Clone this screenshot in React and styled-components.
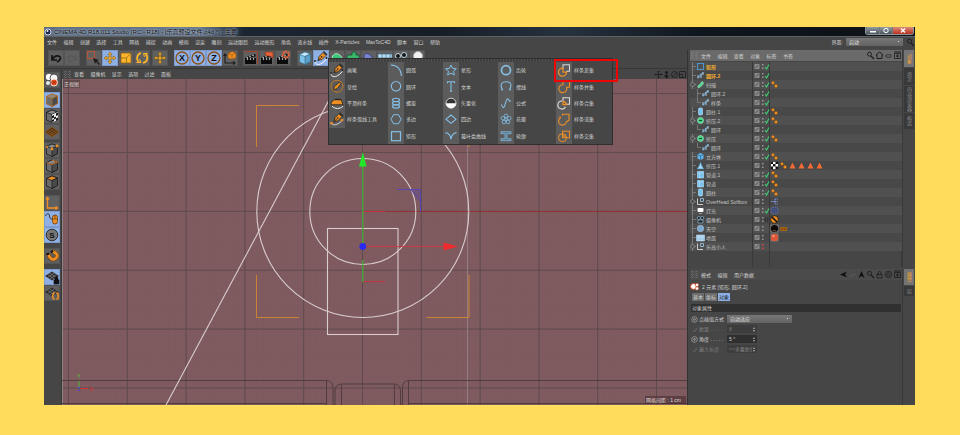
import React, { useState } from 'react';
import styled, { createGlobalStyle } from 'styled-components';

const menus = [
  '文件', '编辑', '创建', '选择', '工具', '网格', '捕捉', '动画', '模拟', '渲染', '雕刻',
  '运动跟踪', '运动图形', '角色', '流水线', '插件', 'X-Particles', 'MaxToC4D', '脚本', '窗口', '帮助',
];

const toolbarGroups = [
  { gap: 4, items: [['undo'], ['redo']] },
  { gap: 6, items: [['select'], ['move', true], ['scale'], ['rotate']] },
  { gap: 2, items: [['move']] },
  { gap: 6, items: [['axisX', true], ['axisY', true], ['axisZ', true], ['coord']] },
  { gap: 5, items: [['clap'], ['clapView'], ['clapGear']] },
  { gap: 6, items: [['cube'], ['pen', true], ['generator'], ['array'], ['deformer'], ['floor'], ['camera'], ['light']] },
];

const sideGroups = [
  { gap: 3, items: [['balls']] },
  { gap: 4, items: [['model', true], ['texture'], ['workplane']] },
  { gap: 2, items: [['points'], ['edges'], ['polys']] },
  { gap: 5, items: [['axisL'], ['mouse', true], ['snapS', true]] },
  { gap: 5, items: [['magnet']] },
  { gap: 5, items: [['planeLock', true], ['planeRot']] },
];

const splineColumns = [
  [['pen', '画笔'], ['sketch', '草绘'], ['smooth', '平滑样条'], ['arcTool', '样条弧线工具']],
  [['arc', '圆弧'], ['circle', '圆环'], ['helix', '螺旋'], ['ngon', '多边'], ['rect', '矩形']],
  [['star', '星形'], ['text', '文本'], ['vector', '矢量化'], ['diamond', '四边'], ['cissoid', '蔓叶类曲线']],
  [['cog', '齿轮'], ['cycloid', '摆线'], ['formula', '公式'], ['flower', '花瓣'], ['profile', '轮廓']],
  [['subtract', '样条差集'], ['union', '样条并集'], ['and', '样条合集'], ['or', '样条或集'], ['intersect', '样条交集']],
];

const objects = [
  { icon: 'oRect', name: '矩形', selected: true, check: true },
  { icon: 'oSpline', name: '圆环.2', selected: true, check: true },
  { icon: 'oSweep', name: '扫描', open: true, check: true, tags: ['phong'] },
  { icon: 'oSpline', name: '圆环.2', depth: 1, check: true },
  { icon: 'oSpline', name: '样条', depth: 1, last: true, check: true },
  { icon: 'oCylinder', name: '圆柱.1', check: true, tags: ['phong'] },
  { icon: 'oExtrude', name: '挤压.2', open: true, check: true, tags: ['phong'] },
  { icon: 'oSpline', name: '圆环', depth: 1, last: true, check: true },
  { icon: 'oExtrude', name: '挤压', open: true, check: true, tags: ['phong'] },
  { icon: 'oSpline', name: '圆环', depth: 1, last: true, check: true },
  { icon: 'oCube', name: '立方体', check: true, tags: ['phong'] },
  { icon: 'oPoly', name: '挤压.1', tags: ['uvw', 'phong', 'tri', 'tri', 'tri', 'tri'] },
  { icon: 'oTube', name: '管道.1', check: true, tags: ['phong'] },
  { icon: 'oTube', name: '管道', check: true, tags: ['phong'] },
  { icon: 'oCylinder', name: '圆柱', check: true, tags: ['phong'] },
  { icon: 'oNull', name: 'OverHead Softbox', open: true, tags: ['xpresso'] },
  { icon: 'oLight', name: '灯光', check: true, tags: ['target'] },
  { icon: 'oCamera', name: '摄像机', tags: ['protect'] },
  { icon: 'oSky', name: '天空', tags: ['matDark', 'compose'] },
  { icon: 'oFloor', name: '地面', tags: ['matRed'] },
  { icon: 'oNull', name: '乐高小人', open: true, hidden: true },
];

const O = '#ee8f24';
const B = '#84bfe6';
const K = '#1c1c1c';

const Cube = ({ edge = K, top = '#8a8a8a' }) => (
  <g stroke={edge} strokeWidth="0.8" strokeLinejoin="round">
    <path d="M2.5 4.5 8 2l5.5 2v7.5L8 14.5 2.5 12z" fill="#6c6c6c" />
    <path d="M2.5 4.5 8 2l5.5 2L8 6.5z" fill={top} />
    <path d="M8 6.5 13.5 4v7.5L8 14.5z" fill="#4b4b4b" />
  </g>
);

const Axis = ({ letter }) => (
  <g>
    <circle cx="8" cy="8" r="6" fill="none" stroke="#8d5016" strokeWidth="1.3" />
    <text x="8" y="11.2" textAnchor="middle" fontSize="9" fontWeight="700" fill="#111" fontFamily="Liberation Sans, sans-serif">{letter}</text>
  </g>
);

const Clap = () => (
  <g>
    <path d="M2 8h11v6H2z" fill="#0c0c0c" />
    <path d="M2 7.5 12.5 4v2.5L3 8.5z" fill="#0c0c0c" />
    <path d="M3.5 7.2l1.2 1M6.5 6.2l1.2 1M9.5 5.2l1.2 1M4 9.5l1-1M7 9.5l1-1M10 9.5l1-1" stroke="#ddd" strokeWidth="1.1" />
  </g>
);

const PenNib = () => (
  <g>
    <path d="M5 10.5 6 6.5 10 2.5 13 5.5 9 9.5z" fill={O} stroke={K} strokeWidth="0.7" />
    <path d="M10 2l1-1 3.5 3.5-1.2 1z" fill="#2c2c2c" />
    <path d="M5 10.5 8 7.5" stroke={K} strokeWidth="0.8" />
    <circle cx="8.7" cy="6.8" r="0.8" fill={K} />
  </g>
);

const Weave = () => (
  <g>
    <path d="M8 2.5 15 7 8 11.5 1 7z" fill="#2c2c2c" />
    <path d="M5.5 4 12.5 8.6M3.5 5.4l7 4.6M10.5 4l-7 4.6M12.8 5.4l-7 4.6" stroke="#8a8a8a" strokeWidth="0.6" />
  </g>
);

const glyphs = {
  undo: <path d="M4 5v5h5M4.5 9.5C6 5.5 12 4.5 12.5 8c0 2-1.5 3-3.5 4" fill="none" stroke="#151515" strokeWidth="1.7" />,
  redo: <path d="M12 5v5H7M11.5 9.5C10 5.5 5 4.5 4 8c0 2 1 3 3 4" fill="none" stroke="#565656" strokeWidth="1.2" />,
  select: (
    <g>
      <rect x="1.5" y="1.5" width="7" height="7" fill="none" stroke="#b3553a" strokeWidth="1.2" />
      <path d="M7 8l6 2-2 1 3 3-1 1-3-3-1 2z" fill={K} />
    </g>
  ),
  move: <path d="M8 2l2 2.5H8.8v2.7h2.7V6L14 8l-2.5 2V8.8H8.800v2.700H10L8 14l-2-2.500h1.200V8.800H4.500V10L2 8l2.500-2v1.200h2.700V4.500H6z" fill="#fdb52b" stroke="#684813" strokeWidth="0.5" />,
  scale: <path d="M3 3h10v10H3zM3 8h5.500v5M8.500 8 13 3" fill="#fdb52b" stroke="#8d5d10" strokeWidth="0.7" />,
  rotate: (
    <g fill="none" stroke="#fdb52b" strokeWidth="1.7">
      <path d="M7 3.2A5 5 0 0 0 5 12M9 12.8A5 5 0 0 0 11.5 4" />
      <path d="M2.5 12.5H7L5.5 9M13.5 3.5h-4l1 3.5" strokeWidth="1" />
    </g>
  ),
  axisX: <Axis letter="X" />,
  axisY: <Axis letter="Y" />,
  axisZ: <Axis letter="Z" />,
  coord: (
    <g>
      <path d="M3 5v8h9M1.5 6 3 4l1.5 2M11 11.500l2 1.500-2 1.500" fill="none" stroke={K} strokeWidth="1.1" />
      <path d="M6 3.5 10 1.5l4 1.500v4.500L10 9.500 6 8z" fill={O} stroke="#8a4a10" strokeWidth="0.6" />
      <path d="M6 3.500 10 5l4-2M10 5v4.500" fill="none" stroke="#8a4a10" strokeWidth="0.6" />
    </g>
  ),
  clap: <g><path d="M2 2.5v-1h12.500V14" fill="none" stroke="#a6432b" /><Clap /></g>,
  clapView: <g><Clap /><path d="M6 2h8v6l-3-2H7z" fill="#e8623a" stroke="#822f18" strokeWidth="0.6" /></g>,
  clapGear: <g><Clap /><circle cx="11" cy="4.5" r="3" fill="none" stroke="#e8623a" strokeWidth="2.2" strokeDasharray="2 0.6" /></g>,
  cube: (
    <g stroke="#2c617c" strokeWidth="0.6">
      <path d="M2.5 4.5 8 2l5.5 2v7.5L8 14.5 2.5 12z" fill="#7fc1e8" />
      <path d="M2.5 4.5 8 2l5.5 2L8 6.5z" fill="#c8eaff" />
      <path d="M8 6.5 13.5 4v7.5L8 14.5z" fill="#5b9fca" />
    </g>
  ),
  pen: (
    <g>
      <PenNib />
      <path d="M2 11c0 4 4 4 6.500 2.500S13 10 14 8" fill="none" stroke="#fff" strokeWidth="1" />
      <path d="M2 10v2M13.500 7v2" stroke={K} strokeWidth="1.4" />
    </g>
  ),
  generator: <path d="M3 9C3 4 7 3 9 4s4 2 4 6z" fill="#38c878" stroke="#c4ecd4" strokeWidth="0.8" />,
  array: <path d="M7 2h4v3h3v4h-3v4H6V9H2V5h5z" fill="#38b868" stroke="#174f30" strokeWidth="0.8" />,
  deformer: <path d="M3 7c0-5 5-4 7-1s4 4 4 8H4z" fill="#7a83ce" stroke="#343c85" strokeWidth="0.8" />,
  floor: <path d="M1 4h14v9H1zM1 8h14M5 4v9M9 4v9M13 4v9" fill="#b9dcf2" stroke="#35647e" strokeWidth="0.6" />,
  camera: (
    <g fill="#151515" stroke="#c9e4f3" strokeWidth="0.9">
      <circle cx="5" cy="6" r="2.5" /><circle cx="11" cy="5" r="2.5" /><path d="M3 9h10v5H3z" />
    </g>
  ),
  light: <circle cx="9" cy="6" r="4.5" fill="#f2f2f2" stroke="#aaa" />,

  balls: (
    <g>
      <circle cx="5" cy="5" r="3.8" fill="#fff" stroke={K} strokeWidth="0.7" />
      <circle cx="10" cy="6" r="4" fill="#f4f4f4" stroke={K} strokeWidth="0.7" />
      <circle cx="10" cy="10.5" r="3.5" fill="#e8501e" stroke="#fff" strokeWidth="0.8" />
      <circle cx="4" cy="11" r="2.5" fill="#e9e9e9" stroke={K} strokeWidth="0.6" />
      <path d="M8 9l4 3M12 9l-4 3" stroke="#912708" strokeWidth="0.7" />
    </g>
  ),
  model: <Cube edge="#b06a22" />,
  texture: (
    <g>
      <Cube />
      <path d="M8 6.500 14 4v8l-6 2.500z" fill="#eee" />
      <path d="M8 8l2-1v2.500l-2 1zM12 5.500l2-1V7l-2 1zM10 9.500l2-1v2l-2 1zM8 12l2-1v2l-2 1zM12 10.500l2-1V12l-2 1z" fill="#111" />
    </g>
  ),
  workplane: (
    <g>
      <path d="M8 3 15 8l-7 5-7-5z" fill="#4a3018" stroke="#96591a" strokeWidth="0.7" />
      <path d="M6 4.500 13 9.500M4 6l7 5M2.500 7l7 5M10 4.500 3 9.500M12 6l-7 5M13.500 7l-7 5" stroke="#a8621c" strokeWidth="0.5" />
    </g>
  ),
  points: <g><Cube /><circle cx="8" cy="7" r="1.4" fill={O} /><circle cx="13" cy="4" r="1.4" fill={O} /><circle cx="3" cy="5" r="1" fill={O} /></g>,
  edges: <g><Cube /><path d="M2.500 4.500 8 6.500 13.500 4M8 2l5.500 2" fill="none" stroke="#c8742a" strokeWidth="1" /></g>,
  polys: <Cube top={O} />,
  axisL: <path d="M3.500 3v10H13M2 4.500 3.500 2.500 5 4.500M11.500 11.500l2 1.500-2 1.500" fill="none" stroke={O} strokeWidth="1.4" />,
  mouse: (
    <g>
      <path d="M1.500 5c1-3 4-3 4 0s3 5 4 0" fill="none" stroke="#333" strokeWidth="1" />
      <rect x="8.5" y="4" width="5" height="9" rx="2.5" fill={O} stroke="#6b3c0a" strokeWidth="0.8" />
      <path d="M8.500 8h5M11 4v4" stroke="#6b3c0a" strokeWidth="0.7" />
    </g>
  ),
  snapS: (
    <g>
      <circle cx="8" cy="8" r="5.8" fill="#777" stroke="#303030" strokeWidth="1" />
      <text x="8" y="11" textAnchor="middle" fontSize="8" fontWeight="700" fill="#111" fontFamily="Liberation Sans, sans-serif">S</text>
    </g>
  ),
  magnet: (
    <g fill="none">
      <path d="M4 6c2 5 5 7 8 4s0-5-4-7" stroke="#6b3c0a" strokeWidth="4" />
      <path d="M4 6c2 5 5 7 8 4s0-5-4-7" stroke={O} strokeWidth="2.8" />
      <path d="M2.500 6.500 5 5.500M7 4.500l2-2" stroke="#111" strokeWidth="2" />
    </g>
  ),
  planeLock: <g><Weave /><path d="M10 11h5v4h-5zM11 11V9.500c0-2 3-2 3 0V11" fill="#111" stroke="#111" strokeWidth="0.7" /></g>,
  planeRot: <g><Weave /><path d="M10.500 7.500c-2.500 1.500-2.500 6 0 7M12.500 7.500c2.500 1.500 2.500 6 0 7" fill="none" stroke={O} strokeWidth="1.6" /></g>,

  sketch: <g><circle cx="8" cy="8" r="6" fill="none" stroke="#c47a22" strokeWidth="1" /><path d="M4.500 11.500 5.500 8l5-4 1.500 1.500-4 5z" fill={O} stroke={K} strokeWidth="0.7" /></g>,
  smooth: (
    <g>
      <path d="M2 9.500c0-4 4-5.500 6-5.500h4l2 5.500z" fill={O} stroke={K} strokeWidth="0.7" />
      <path d="M6 4.500h6" stroke={K} />
      <path d="M3 11c3 3 8 3 11 0" fill="none" stroke="#eee" />
    </g>
  ),
  arcTool: <g><PenNib /><path d="M2 11c1 3 4 3 6 2s4-2 6-5" fill="none" stroke="#eee" strokeWidth="0.9" /><circle cx="2.5" cy="12" r="1.3" fill={O} /><circle cx="13" cy="9" r="1.2" fill={O} /></g>,
  arc: <path d="M3 3c6 0 10 4 10.500 10.500" fill="none" stroke={B} strokeWidth="1.2" />,
  circle: <circle cx="8" cy="8" r="4.7" fill="none" stroke={B} strokeWidth="1.1" />,
  helix: (
    <g fill="none" stroke={B} strokeWidth="1.1">
      <ellipse cx="8" cy="4.8" rx="3.5" ry="1.7" /><ellipse cx="8" cy="8" rx="3.5" ry="1.7" /><ellipse cx="8" cy="11.2" rx="3.5" ry="1.7" />
    </g>
  ),
  ngon: <path d="M5.500 3.500h5L13 8l-2.500 4.500h-5L3 8z" fill="none" stroke={B} strokeWidth="1" />,
  rect: <rect x="3.5" y="3.5" width="9" height="9" fill="none" stroke={B} strokeWidth="1.2" />,
  star: <path d="M8 2.800 9.600 6.200l3.700.4-2.800 2.400.9 3.700L8 10.900l-3.400 1.800.9-3.700-2.800-2.400 3.700-.4z" fill="none" stroke={B} strokeWidth="1" />,
  text: <path d="M4.500 5V3.500h7V5M8 3.500v9.500M6.800 13h2.400" fill="none" stroke={B} strokeWidth="1.1" />,
  vector: <g><circle cx="8" cy="8" r="5" fill="#333" stroke="#ddd" strokeWidth="0.9" /><path d="M3 8h10a5 5 0 0 1-10 0z" fill="#fff" /></g>,
  diamond: <path d="M8 3.800 13 8l-5 4.200L3 8z" fill="none" stroke={B} strokeWidth="1.1" />,
  cissoid: <path d="M2.500 4.500C6 5 7.500 7 8 11c.5-4 2-6 5.500-6.500" fill="none" stroke={B} strokeWidth="1.2" />,
  cog: <circle cx="8" cy="8" r="4.5" fill="none" stroke={B} strokeWidth="1.7" />,
  cycloid: <path d="M3 11.500h1.500C1 5 5 3.500 8 3.500s7 1.500 3.500 8H13" fill="none" stroke={B} strokeWidth="1.1" />,
  formula: <path d="M3 9.500c1.500 0 1 3 2.500 3s2.500-9 4-9 .5 3 3.500 2.500" fill="none" stroke={B} strokeWidth="1.1" />,
  flower: (
    <g fill="none" stroke={B} strokeWidth="0.8">
      <circle cx="8" cy="8" r="1.3" />
      <circle cx="8" cy="4.6" r="1.8" /><circle cx="11.2" cy="7" r="1.8" /><circle cx="10" cy="10.8" r="1.8" /><circle cx="6" cy="10.8" r="1.8" /><circle cx="4.8" cy="7" r="1.8" />
    </g>
  ),
  profile: <path d="M3 3.500h10v2H9v5h4v2H3v-2h4v-5H3z" fill="#5b7c92" stroke={B} strokeWidth="0.7" />,
  subtract: <g fill="none"><path d="M7 7V2.500h6.500V9H10" stroke="#d6d6d6" strokeWidth="1.1" /><path d="M7 6a4 4 0 1 0 3.500 4H7z" stroke={O} strokeWidth="1.2" /></g>,
  union: <path d="M7 6.500V2.500h6.500V9h-3a4 4 0 1 1-3.500-2.500z" fill="none" stroke={O} strokeWidth="1.1" />,
  and: <g fill="none"><path d="M7 6V2.500h6.500V9H10M9.500 11.500A4 4 0 1 1 6 5.800" stroke="#ddd" strokeWidth="1.1" /><path d="M7 6.500c2 0 3 1 3.500 3H7z" stroke={O} strokeWidth="1.2" /></g>,
  or: <path d="M6.500 4.500V3H13v6l-2.500 1.500a4 4 0 1 1-6-4L3.500 5" fill="none" stroke={O} strokeWidth="1.1" />,
  intersect: <g fill="none" stroke={O} strokeWidth="1"><rect x="6.5" y="3" width="7" height="6.5" /><circle cx="6.5" cy="9.5" r="4" /><circle cx="8.5" cy="7.5" r="1" /></g>,
};

// object manager glyphs, drawn on a 9x9 box
const small = {
  oRect: <rect x="1.5" y="1.5" width="6" height="6" fill="none" stroke="#4f94c4" />,
  oSpline: <g><path d="M1.500 7C4 7 4 2 7.500 2" fill="none" stroke="#5d90b9" strokeWidth="1.5" /><path d="M2 4v3M5 3v4M7 1v3" stroke="#c8e2f4" strokeWidth="0.8" /></g>,
  oSweep: <path d="M2 7.500C1 5 4 5 4.500 3.500S6 1.500 7 2s0 3-1.500 4-3 2.500-3.500 1.500z" fill="#4cd68c" stroke="#bdf5d7" strokeWidth="0.5" />,
  oCylinder: <rect x="2.5" y="1" width="4" height="7" rx="1" fill="#79c2ee" stroke="#b9e4ff" strokeWidth="0.6" />,
  oTube: <path d="M1.500 1.500h6V8h-6zM1.500 3h6M3.500 3v5" fill="#79c2ee" stroke="#b9e4ff" strokeWidth="0.6" />,
  oExtrude: <g><circle cx="4.5" cy="4.5" r="3" fill="#45d083" stroke="#a9efca" strokeWidth="0.6" /><path d="M3 4.500h3" stroke="#10502d" /></g>,
  oCube: <g><path d="M1.500 2.500 4.500 1l3 1.500v4l-3 1.500-3-1.500z" fill="#62b4ea" /><path d="M1.500 2.500 4.500 4l3-1.500M4.500 4v4" fill="none" stroke="#255a80" strokeWidth="0.6" /></g>,
  oPoly: <path d="M4.500 1 6 5l2 3H1l2-3z" fill="#a3d7f7" stroke="#437fa3" strokeWidth="0.6" />,
  oNull: <g fill="none" stroke="#ddd" strokeWidth="0.9"><path d="M1.500 1.500v6H7" /><path d="M4.500 1.500h3v3h-3z" stroke="#9bbdd4" /></g>,
  oLight: <g><rect x="1.5" y="2" width="6" height="4" rx="1" fill="#fff" /><path d="M3 7.500h3" stroke="#999" /></g>,
  oCamera: <g fill="#222" stroke="#8fb8d2" strokeWidth="0.7"><circle cx="2.8" cy="3" r="1.6" /><circle cx="6.2" cy="3" r="1.6" /><path d="M2 5h5v3H2z" /></g>,
  oSky: <circle cx="4.5" cy="4.5" r="3.2" fill="#7fa8cd" stroke="#a7c8e4" strokeWidth="0.6" />,
  oFloor: <path d="M.5 2h8v6h-8zM.5 4h8M3 2v6M6 2v6" fill="#9cc8e8" stroke="#d5edfb" strokeWidth="0.5" />,
  phong: <g fill={O} stroke="#603608" strokeWidth="0.3"><circle cx="3" cy="2.8" r="1.6" /><circle cx="6" cy="6" r="1.7" /></g>,
  uvw: <g><path d="M1 1h7v7H1z" fill="#fff" /><path d="M1 1h2v2H1zM5.500 1H8v2H5.500zM3 3h2.500v2.500H3zM1 5.500h2V8H1zM5.500 5.500H8V8H5.500z" fill="#111" /></g>,
  tri: <path d="M4.500 1.500 7.500 7.500h-6z" fill="#f26a34" />,
  xpresso: <path d="M1 4.500h4M5 2v5M5 2h3M5 4.500h3M5 7h3" fill="none" stroke="#7c93dc" strokeWidth="1.1" strokeDasharray="1.5 0.7" />,
  target: <g fill="#37405e" stroke="#6778b8" strokeWidth="0.7"><circle cx="4.5" cy="4.5" r="3.5" /><circle cx="4.5" cy="4.5" r="1.6" /></g>,
  protect: <g><circle cx="4.5" cy="4.5" r="3.8" fill={O} stroke="#151515" strokeWidth="0.7" /><path d="M2 2l5 5" stroke="#151515" strokeWidth="1.7" /></g>,
  matDark: <g><path d="M.5.5h8v8h-8z" fill="#777" /><circle cx="4.5" cy="4.5" r="3.6" fill="#0e0a08" /><path d="M3 6.500l3 .5" stroke="#7d5d43" /></g>,
  matRed: <g><path d="M.5.5h8v8h-8z" fill="#777" /><circle cx="4.5" cy="4.5" r="3.7" fill="#dc5737" /><circle cx="3.5" cy="3" r="1" fill="#f5a48d" /></g>,
  compose: <g><path d="M1 3h7v4H1z" fill="#a66312" /><path d="M2.500 4.500h1v1h-1zM5.500 4.500h1v1h-1z" fill="#2b1804" /></g>,

  search: <g fill="none" stroke={K}><circle cx="3.5" cy="3.2" r="2" strokeWidth="0.9" /><path d="M5 5l3 3" strokeWidth="1.3" /></g>,
  home: <path d="M4.500 1 8 4H7v3.500H2V4H1z" fill="none" stroke={K} />,
  eye: <ellipse cx="4.5" cy="5" rx="3" ry="1.4" fill="none" stroke={K} strokeWidth="0.7" />,
  plus: <g fill="none" stroke={K}><path d="M1.500 2.500h6v5h-6z" strokeWidth="0.8" /><path d="M1 1h7M4.500 3.500v3M3 5h3" /></g>,
  back: <path d="M8 1.500 1 4.500l7 3-2-3z" fill="#0f0f0f" />,
  forward: <path d="M1 6c2 1 3-1 6-2" fill="none" stroke="#5c5c5c" />,
  up: <path d="M4.500 1 7.500 8l-3-2-3 2z" fill="#0f0f0f" />,
  lock: <path d="M2 4.500h5V8H2zM3 4.500V3c0-2 3-2 3 0v1.500" fill="none" stroke={K} strokeWidth="0.8" />,
  ring: <g fill="none" stroke={K} strokeWidth="0.8"><circle cx="4.5" cy="4.5" r="3.2" /><circle cx="4.5" cy="4.5" r="1.4" /></g>,
  pan: <path d="M4.500 1v7M1 4.500h7M3.500 2l1-1 1 1M3.500 7l1 1 1-1M2 3.500l-1 1 1 1M7 3.500l1 1-1 1" fill="none" stroke={K} strokeWidth="0.8" />,
  dolly: <path d="M4.500 1v6M2.500 5.500l2 2 2-2M3 2.500h3" fill="none" stroke={K} strokeWidth="1.3" />,
  orbit: <g fill="none" stroke={K} strokeWidth="0.8"><circle cx="4.5" cy="4.5" r="3" /><path d="M2 7l5-5" /></g>,
  maximize: <path d="M1.500 1.500h6v6h-6zM1.500 4.500h3v3" fill="none" stroke={K} strokeWidth="0.8" />,
  grip: <path d="M1 2h7M1 4.500h7M1 7h7M2.500 1v7M6.500 1v7" fill="none" stroke="#8c8c8c" strokeWidth="0.5" strokeDasharray="1 1" />,
  keyOn: <g fill="none" stroke="#aaa"><circle cx="4.5" cy="4.5" r="2.8" strokeWidth="0.7" /><circle cx="4.5" cy="4.5" r="0.8" /></g>,
  keyOff: <path d="M3 6c2 1 4-1 3-3" fill="none" stroke="#7a7a7a" strokeWidth="0.8" />,
};

const Icon = ({ name }) => <svg width="16" height="16" viewBox="0 0 16 16" aria-hidden="true">{glyphs[name]}</svg>;
const SmallIcon = ({ name }) => <svg width="9" height="9" viewBox="0 0 9 9" aria-hidden="true">{small[name]}</svg>;

function Scene() {
  const cols = Array.from({ length: 11 }, (_, i) => 68.5 + i * 58.8);
  const rows = Array.from({ length: 6 }, (_, i) => 93.5 + i * 58.9);
  return (
    <SceneSvg viewBox="62 79 625 326" preserveAspectRatio="xMinYMin slice">
      <defs>
        <pattern id="fine" x="68.5" y="93.5" width="5.88" height="5.89" patternUnits="userSpaceOnUse">
          <path d="M0 0H5.880M0 0V5.890" stroke="#6d4d50" strokeWidth="0.7" fill="none" />
        </pattern>
      </defs>
      <rect x="62" y="79" width="625" height="326" fill="#7f5b5f" />
      <rect x="62" y="79" width="625" height="326" fill="url(#fine)" opacity="0.3" />
      <g stroke="#5e4a4c" strokeWidth="1">
        {cols.map((x) => <path key={x} d={`M${x} 79V405`} />)}
        {rows.map((y) => <path key={y} d={`M62 ${y}H687`} />)}
      </g>
      <path d="M62.500 79V405" stroke="#8f8486" />
      <path d="M467.500 79V405" stroke="#9c8789" strokeWidth="0.8" />
      <path d="M362.500 211.500H687" stroke="#8f3337" />
      <g fill="none" stroke="#513c3f" strokeWidth="1">
        <path d="M62 380.500H327Q333 381 333 388V405M326.500 380.500V405" />
        <path d="M335 405V391Q335 384 342 384H394Q400.500 384 400.500 391V405M341.500 384V405M394.500 384V405" />
        <path d="M402.500 405V388Q402.500 381 408.500 380.500H687M408.500 380.500V405" />
        <path d="M62 403.500H327M408 403.500H687" />
      </g>
      <g fill="none" stroke="#d9cccd" strokeWidth="1.1">
        <circle cx="362.8" cy="211.5" r="106" />
        <circle cx="362.8" cy="211.5" r="53" />
        <rect x="327.5" y="228.5" width="70.5" height="106" />
        <path d="M166 405 345 70" />
      </g>
      <path d="M256.500 147V105.500H299M256.500 275V317.500H299M426.500 317.500H469V275M469 147V105.500H426" fill="none" stroke="#cb8434" strokeWidth="1" />
      <path d="M397 189.500H420.500V212M411 190 420 201" fill="none" stroke="#5647b4" strokeWidth="1" />
      <path d="M411 190H420V201z" fill="#5647b4" opacity="0.3" />
      <path d="M363 211.500H385M363 281.500H385" stroke="#c5333a" />
      <path d="M362.800 165V246M362.800 260V282" stroke="#43b536" strokeWidth="1.2" />
      <path d="M366 246.500H444" stroke="#c93c42" />
      <path d="M362.800 152 366.500 166.500H359z" fill="#22e829" />
      <path d="M458 246.500 443.500 242.500V250.500z" fill="#ef2b2d" />
      <circle cx="362.8" cy="246.5" r="3.4" fill="#2b2bf0" />
      <path d="M79 388V381" stroke="#54b33c" />
      <path d="M80 388.500H88" stroke="#d03338" />
      <g fontSize="5" fontWeight="700" fontFamily="Liberation Sans, sans-serif" textAnchor="middle">
        <text x="79" y="378" fill="#54b33c">Y</text>
        <text x="91.5" y="390.5" fill="#d03338">X</text>
        <text x="79" y="391" fill="#4747c8">Z</text>
      </g>
    </SceneSvg>
  );
}

function ObjectRow({ item }) {
  return (
    <TreeRow>
      <NameCell $depth={item.depth || 0} $selected={item.selected}>
        <svg width="6" height="9" viewBox="0 0 6 9">
          <path d={item.last ? 'M2.500 0V4.500H6' : 'M2.500 0V9M2.500 4.500H6'} fill="none" stroke="#8c8c8c" strokeWidth="0.7" />
          {item.open && <circle cx="2.5" cy="4.5" r="1.9" fill="#4a4a4a" stroke="#999" strokeWidth="0.7" />}
        </svg>
        <SmallIcon name={item.icon} />
        <span>{item.name}</span>
      </NameCell>
      <StatusCell>
        <svg width="17" height="9" viewBox="0 0 17 9">
          <rect x="1.5" y="2" width="5" height="5" fill="#8a8a8a" />
          <path d="M2.500 6 5.500 3" stroke="#444" strokeWidth="0.8" />
          <path d="M9 2h1.500v1.500H9zM9 5.500h1.500V7H9z" fill={item.hidden ? '#f0443c' : '#9a9a9a'} />
          {item.check && <path d="M12 5l1.500 2L16 2.500" fill="none" stroke="#3ccf74" strokeWidth="1.1" />}
          {item.icon === 'oCamera' && <path d="M12 3h3v3h-3z" fill="none" stroke="#222" strokeDasharray="1 1" />}
        </svg>
      </StatusCell>
      <TagCell>
        {(item.tags || []).map((tag, i) => <SmallIcon key={i} name={tag} />)}
      </TagCell>
    </TreeRow>
  );
}

export default function App() {
  const [tab, setTab] = useState('对象');
  const [angle, setAngle] = useState('5 °');

  return (
    <Page>
      <GlobalStyle />
      <AppWindow>
        <TitleBar>
          <TitleText>
            <svg width="8" height="8" viewBox="0 0 8 8"><circle cx="4" cy="4" r="3" fill="#1a2b4e" stroke="#cfd8e6" /><circle cx="3.5" cy="3" r="1" fill="#eee" /></svg>
            CINEMA 4D R18.011 Studio (RC - R18) - [乐高预设文件.c4d *] - 主要
          </TitleText>
          <WindowButtons>
            <WindowButton aria-label="最小化"><svg width="8" height="7"><path d="M1 4h6v1.500H1z" fill="#fff" /></svg></WindowButton>
            <WindowButton aria-label="最大化"><svg width="8" height="7"><circle cx="4" cy="3.5" r="2.2" fill="none" stroke="#fff" /></svg></WindowButton>
            <WindowButton $close aria-label="关闭"><svg width="8" height="7"><path d="M2 1.500 6 5.500M6 1.500 2 5.500" stroke="#fff" strokeWidth="1.4" /></svg></WindowButton>
          </WindowButtons>
        </TitleBar>

        <MenuBar>
          <MenuList $width={393}>
            {menus.map((m) => <MenuButton key={m}>{m}</MenuButton>)}
          </MenuList>
          <LayoutPicker>
            <label htmlFor="layout">界面:</label>
            <Dropdown id="layout" $width={57} defaultValue="启动"><option>启动</option></Dropdown>
            <SmallIcon name="search" />
          </LayoutPicker>
        </MenuBar>

        <Main>
          <Left>
            <Toolbar>
              {toolbarGroups.map((g, i) => (
                <ToolGroup key={i} $gap={g.gap}>
                  {g.items.map(([name, active]) => (
                    <ToolButton key={name} $active={active} aria-label={name}><Icon name={name} /></ToolButton>
                  ))}
                </ToolGroup>
              ))}
            </Toolbar>

            <Stage>
              <SideBar>
                {sideGroups.map((g, i) => (
                  <SideGroup key={i} $gap={g.gap}>
                    {g.items.map(([name, active]) => (
                      <ToolButton key={name} $active={active} aria-label={name}><Icon name={name} /></ToolButton>
                    ))}
                  </SideGroup>
                ))}
              </SideBar>

              <Viewport>
                <ViewportBar>
                  <BarStart>
                    <SmallIcon name="grip" />
                    <MenuList $width={97}>
                      {['查看', '摄像机', '显示', '选项', '过滤', '面板'].map((m) => <MenuButton key={m}>{m}</MenuButton>)}
                    </MenuList>
                  </BarStart>
                  <IconRow $tight>
                    {['pan', 'dolly', 'orbit', 'maximize'].map((n) => <SmallIcon key={n} name={n} />)}
                  </IconRow>
                </ViewportBar>
                <Canvas>
                  <Scene />
                  <ViewName>正视图</ViewName>
                  <GridInfo>网格间距 : 1 cm</GridInfo>
                </Canvas>
              </Viewport>
            </Stage>

            <SplinePopup>
              <PopupGrip />
              <PopupGrid>
                {splineColumns.map((column, i) => (
                  <PopupColumn key={i}>
                    {column.map(([icon, label]) => (
                      <PopupItem key={icon}><Icon name={icon} />{label}</PopupItem>
                    ))}
                  </PopupColumn>
                ))}
              </PopupGrid>
              <Highlight />
            </SplinePopup>
          </Left>

          <Right>
            <Dock $height={217}>
              <Manager>
                <ManagerBar $light>
                  <BarStart>
                    <SmallIcon name="grip" />
                    <MenuList $width={92}>
                      {['文件', '编辑', '查看', '对象', '标签', '书签'].map((m) => <MenuButton key={m}>{m}</MenuButton>)}
                    </MenuList>
                  </BarStart>
                  <IconRow>
                    {['search', 'home', 'eye', 'plus'].map((n) => <SmallIcon key={n} name={n} />)}
                  </IconRow>
                </ManagerBar>
                <Tree>
                  {objects.map((item, i) => <ObjectRow key={i} item={item} />)}
                  <TreeFill><span /><span /><span /></TreeFill>
                </Tree>
              </Manager>
              <SideTabs>
                <SideTab $height={17} $active>对象</SideTab>
                <SideTab $height={17}>场次</SideTab>
                <SideTab $height={26}>内容浏览器</SideTab>
                <SideTab $height={16}>构造</SideTab>
              </SideTabs>
            </Dock>

            <Dock>
              <Manager>
                <ManagerBar>
                  <BarStart>
                    <SmallIcon name="grip" />
                    <MenuList $width={53}>
                      {['模式', '编辑', '用户数据'].map((m) => <MenuButton key={m}>{m}</MenuButton>)}
                    </MenuList>
                  </BarStart>
                  <IconRow>
                    {['back', 'forward', 'up', 'search', 'lock', 'ring', 'plus'].map((n) => <SmallIcon key={n} name={n} />)}
                  </IconRow>
                </ManagerBar>
                <Selection>
                  <svg width="10" height="9" viewBox="0 0 10 9">
                    <circle cx="3.5" cy="4.5" r="3" fill="#fff" stroke="#c8401f" />
                    <circle cx="7" cy="3" r="1.7" fill="#fff" stroke="#c8401f" strokeWidth="0.6" />
                    <circle cx="7" cy="6.5" r="1.7" fill="#fff" stroke="#c8401f" strokeWidth="0.6" />
                  </svg>
                  2 元素 [矩形, 圆环.2]
                </Selection>
                <AttrTabs>
                  {['基本', '坐标', '对象'].map((t) => (
                    <AttrTab key={t} $active={t === tab} onClick={() => setTab(t)}>{t}</AttrTab>
                  ))}
                </AttrTabs>
                <SectionTitle>对象属性</SectionTitle>
                <Field>
                  <SmallIcon name="keyOn" />
                  <label htmlFor="interp">点插值方式</label>
                  <Dropdown id="interp" $width={65} defaultValue="自动适应"><option>自动适应</option></Dropdown>
                </Field>
                <Field $disabled>
                  <SmallIcon name="keyOff" />
                  <label htmlFor="count">数量 . . . . .</label>
                  <NumberBox><input id="count" defaultValue="8" disabled /><Spinner /></NumberBox>
                </Field>
                <Field>
                  <SmallIcon name="keyOn" />
                  <label htmlFor="angle">角度 . . . . .</label>
                  <NumberBox $enabled><input id="angle" value={angle} onChange={(e) => setAngle(e.target.value)} /><Spinner /></NumberBox>
                </Field>
                <Field $disabled>
                  <SmallIcon name="keyOff" />
                  <label htmlFor="maxlen">最大长度. .</label>
                  <NumberBox><input id="maxlen" defaultValue="<<多重数值>>" disabled /><Spinner /></NumberBox>
                </Field>
              </Manager>
              <SideTabs>
                <SideTab $height={16} $active>属性</SideTab>
                <SideTab $height={10}>层</SideTab>
              </SideTabs>
            </Dock>
          </Right>
        </Main>
      </AppWindow>
    </Page>
  );
}

const Spinner = () => (
  <svg width="4" height="7" viewBox="0 0 4 7"><path d="M2 1 3 3H1zM2 6 3 4H1z" fill="#aaa" /></svg>
);

const GlobalStyle = createGlobalStyle`
  * { box-sizing: border-box; }
  body {
    margin: 0;
    background: #ffdc5c;
  }
  body, button, input, select {
    font-family: "Liberation Sans", "Noto Sans CJK SC", sans-serif;
    font-size: 5px;
    line-height: 8px;
  }
  button, input, select {
    margin: 0;
    padding: 0;
    border: 0;
    border-radius: 0;
    background: none;
    color: inherit;
  }
  svg { display: block; flex: none; }
`;

const Page = styled.div`
  display: flex;
  min-height: 100vh;
  padding: 27px 45px 30px 44px;
`;

const AppWindow = styled.div`
  display: flex;
  flex: 1;
  flex-direction: column;
  min-width: 0;
  background: #464646;
  color: #d2d2d2;
`;

const TitleBar = styled.header`
  display: flex;
  justify-content: space-between;
  height: 10px;
  background: linear-gradient(90deg, #5f6e83 0, #66758a 18%, #1c2632 23%, #161d26 45%, #26323f 60%, #10161d 75%, #0d1116 100%);
  border-bottom: 1px solid #5c6166;
`;

const TitleText = styled.div`
  display: flex;
  align-items: center;
  gap: 2px;
  font-size: 6px;
  white-space: nowrap;
  color: #0b0e12;
  text-shadow: 0 0 2px #b8c4d4, 0 0 3px #b8c4d4;
`;

const WindowButtons = styled.div`
  display: flex;
  height: 8px;
  margin-right: 1px;
  border: 1px solid #8d959c;
  border-top: 0;
  border-radius: 0 0 3px 3px;
  overflow: hidden;
`;

const WindowButton = styled.button`
  display: flex;
  align-items: center;
  justify-content: center;
  width: ${({ $close }) => ($close ? '21px' : '13px')};
  background: ${({ $close }) => ($close ? 'linear-gradient(#d98c7c, #b8311c)' : 'linear-gradient(#949ba3, #4b535c)')};
  border-left: 1px solid #737b82;
`;

const MenuBar = styled.nav`
  display: flex;
  justify-content: space-between;
  height: 13px;
  padding-left: 3px;
`;

const MenuList = styled.div`
  display: flex;
  align-items: center;
  justify-content: space-between;
  width: ${({ $width }) => $width}px;
  height: 10px;
`;

const MenuButton = styled.button`
  white-space: nowrap;
`;

const BarStart = styled.div`
  display: flex;
  align-items: center;
  gap: 2px;
`;

const LayoutPicker = styled.div`
  display: flex;
  align-items: center;
  gap: 3px;
  height: 10px;
`;

const Dropdown = styled.select`
  appearance: none;
  width: ${({ $width }) => $width}px;
  height: 8px;
  padding: 0 3px;
  color: #e2e2e2;
  background:
    linear-gradient(135deg, #e0e0e0 50%, transparent 50%) right 3px center / 2px 2px no-repeat,
    linear-gradient(#777, #636363);
`;

const Main = styled.main`
  display: flex;
  flex: 1;
`;

const Left = styled.section`
  position: relative;
  display: flex;
  flex: 1;
  flex-direction: column;
  min-width: 0;
`;

const Toolbar = styled.div`
  display: flex;
  height: 18px;
`;

const ToolGroup = styled.div`
  display: flex;
  margin-left: ${({ $gap }) => $gap}px;
`;

const ToolButton = styled.button`
  width: 16px;
  height: 16px;
  background: ${({ $active }) => ($active ? '#8fb0e4' : '#606060')};
  box-shadow: inset 0 0 0 1px ${({ $active }) => ($active ? '#7d9ccd' : '#545454')};
`;

const Stage = styled.div`
  display: flex;
  flex: 1;
  border-top: 1px solid #373737;
`;

const SideBar = styled.aside`
  width: 18px;
  border-right: 1px solid #383838;
`;

const SideGroup = styled.div`
  display: flex;
  flex-direction: column;
  padding-top: ${({ $gap }) => $gap}px;
`;

const Viewport = styled.div`
  display: flex;
  flex: 1;
  flex-direction: column;
  min-width: 0;
`;

const ViewportBar = styled.div`
  display: flex;
  align-items: center;
  justify-content: space-between;
  height: 10px;
  padding-left: 1px;
`;

const IconRow = styled.div`
  display: flex;
  align-items: center;

  svg {
    margin-left: ${({ $tight }) => ($tight ? '-1px' : '0')};
  }
`;

const Canvas = styled.div`
  position: relative;
  flex: 1;
  overflow: hidden;
  background: #7f5b5f;
`;

const SceneSvg = styled.svg`
  width: 100%;
  height: 100%;
`;

const ViewName = styled.span`
  position: absolute;
  top: 1px;
  left: 1px;
  padding: 0 1px;
  background: rgba(70, 55, 57, 0.5);
  color: #d8d0d0;
`;

const GridInfo = styled.span`
  position: absolute;
  right: 1px;
  bottom: 1px;
  padding: 0 5px 0 1px;
  background: rgba(70, 45, 48, 0.6);
  color: #e0d8d8;
`;

const SplinePopup = styled.div`
  position: absolute;
  top: 8px;
  left: 284px;
  width: 285px;
  background: #464646;
  border: 1px solid #2f2f2f;
`;

const PopupGrip = styled.div`
  height: 3px;
  background: repeating-linear-gradient(90deg, #505050 0 1px, #404040 1px 3px);
`;

const PopupGrid = styled.div`
  display: grid;
  grid-template-columns: 59px 55px 55px 58px 1fr;
  height: 82px;
`;

const PopupColumn = styled.div`
  display: grid;
  grid-template-rows: repeat(5, 1fr);
`;

const PopupItem = styled.button`
  display: flex;
  align-items: center;
  gap: 2px;
  text-align: left;
  white-space: nowrap;

  svg {
    height: 100%;
    background: #5c5c5c;
  }
`;

const Highlight = styled.div`
  position: absolute;
  top: 0;
  left: 225px;
  width: 64px;
  height: 23px;
  border: 2px solid #f00505;
`;

const Right = styled.aside`
  display: flex;
  flex-direction: column;
  gap: 2px;
  width: 228px;
  padding-left: 2px;
  border-left: 1px solid #333;
`;

const Dock = styled.section`
  display: flex;
  gap: 1px;
  height: ${({ $height }) => ($height ? `${$height}px` : 'auto')};
  flex: ${({ $height }) => ($height ? 'none' : '1')};
`;

const Manager = styled.div`
  display: flex;
  flex: 1;
  flex-direction: column;
  min-width: 0;
  border-right: 1px solid #393939;
`;

const ManagerBar = styled.div`
  display: flex;
  flex: none;
  align-items: center;
  justify-content: space-between;
  height: 11px;
  margin-bottom: 1px;
  background: ${({ $light }) => ($light ? '#6a6a6a' : '#4b4b4b')};
`;

const Tree = styled.div`
  display: flex;
  flex: 1;
  flex-direction: column;
`;

const TreeRow = styled.div`
  display: grid;
  grid-template-columns: 63px 17px 1fr;
  height: 9px;
  background: #505050;

  &:nth-child(even) {
    background: #484848;
  }
`;

const NameCell = styled.div`
  display: flex;
  align-items: center;
  padding-left: ${({ $depth }) => $depth * 5}px;
  border-right: 1px solid #383838;
  color: ${({ $selected }) => ($selected ? '#f5ae2e' : '#c4c4c4')};
  font-weight: ${({ $selected }) => ($selected ? 700 : 400)};
  white-space: nowrap;
  overflow: hidden;

  span {
    padding-left: 1px;
  }
`;

const StatusCell = styled.div`
  border-right: 1px solid #383838;
`;

const TagCell = styled.div`
  display: flex;
`;

const TreeFill = styled.div`
  display: grid;
  flex: 1;
  grid-template-columns: 63px 17px 1fr;

  span {
    border-right: 1px solid #3a3a3a;
  }
`;

const SideTabs = styled.div`
  display: flex;
  flex-direction: column;
  gap: 1px;
  width: 11px;
  padding-right: 1px;
`;

const SideTab = styled.button`
  height: ${({ $height }) => $height}px;
  writing-mode: vertical-rl;
  text-align: center;
  background: ${({ $active }) => ($active ? '#747474' : '#393939')};
  color: ${({ $active }) => ($active ? '#f7a52b' : '#8d8d8d')};
`;

const Selection = styled.div`
  display: flex;
  align-items: center;
  gap: 2px;
  height: 11px;
`;

const AttrTabs = styled.div`
  display: flex;
  gap: 1px;
  padding: 1px 0 3px 2px;
`;

const AttrTab = styled.button`
  width: 12px;
  height: 8px;
  background: ${({ $active }) => ($active ? '#8fb0e4' : '#6c6c6c')};
  color: ${({ $active }) => ($active ? '#101820' : '#cfcfcf')};
`;

const SectionTitle = styled.h2`
  margin: 0 1px 2px;
  padding-left: 1px;
  background: #303030;
  font-size: 5px;
  font-weight: 400;
`;

const Field = styled.div`
  display: flex;
  align-items: center;
  height: 10px;
  color: ${({ $disabled }) => ($disabled ? '#7d7d7d' : '#d2d2d2')};

  label {
    width: 28px;
    white-space: nowrap;
  }
`;

const NumberBox = styled.div`
  display: flex;
  align-items: center;
  width: 30px;
  height: 8px;
  padding: 0 1px 0 2px;
  background: ${({ $enabled }) => ($enabled ? '#2f2f2f' : '#3d3d3d')};

  input {
    flex: 1;
    min-width: 0;
    height: 8px;
  }
`;
